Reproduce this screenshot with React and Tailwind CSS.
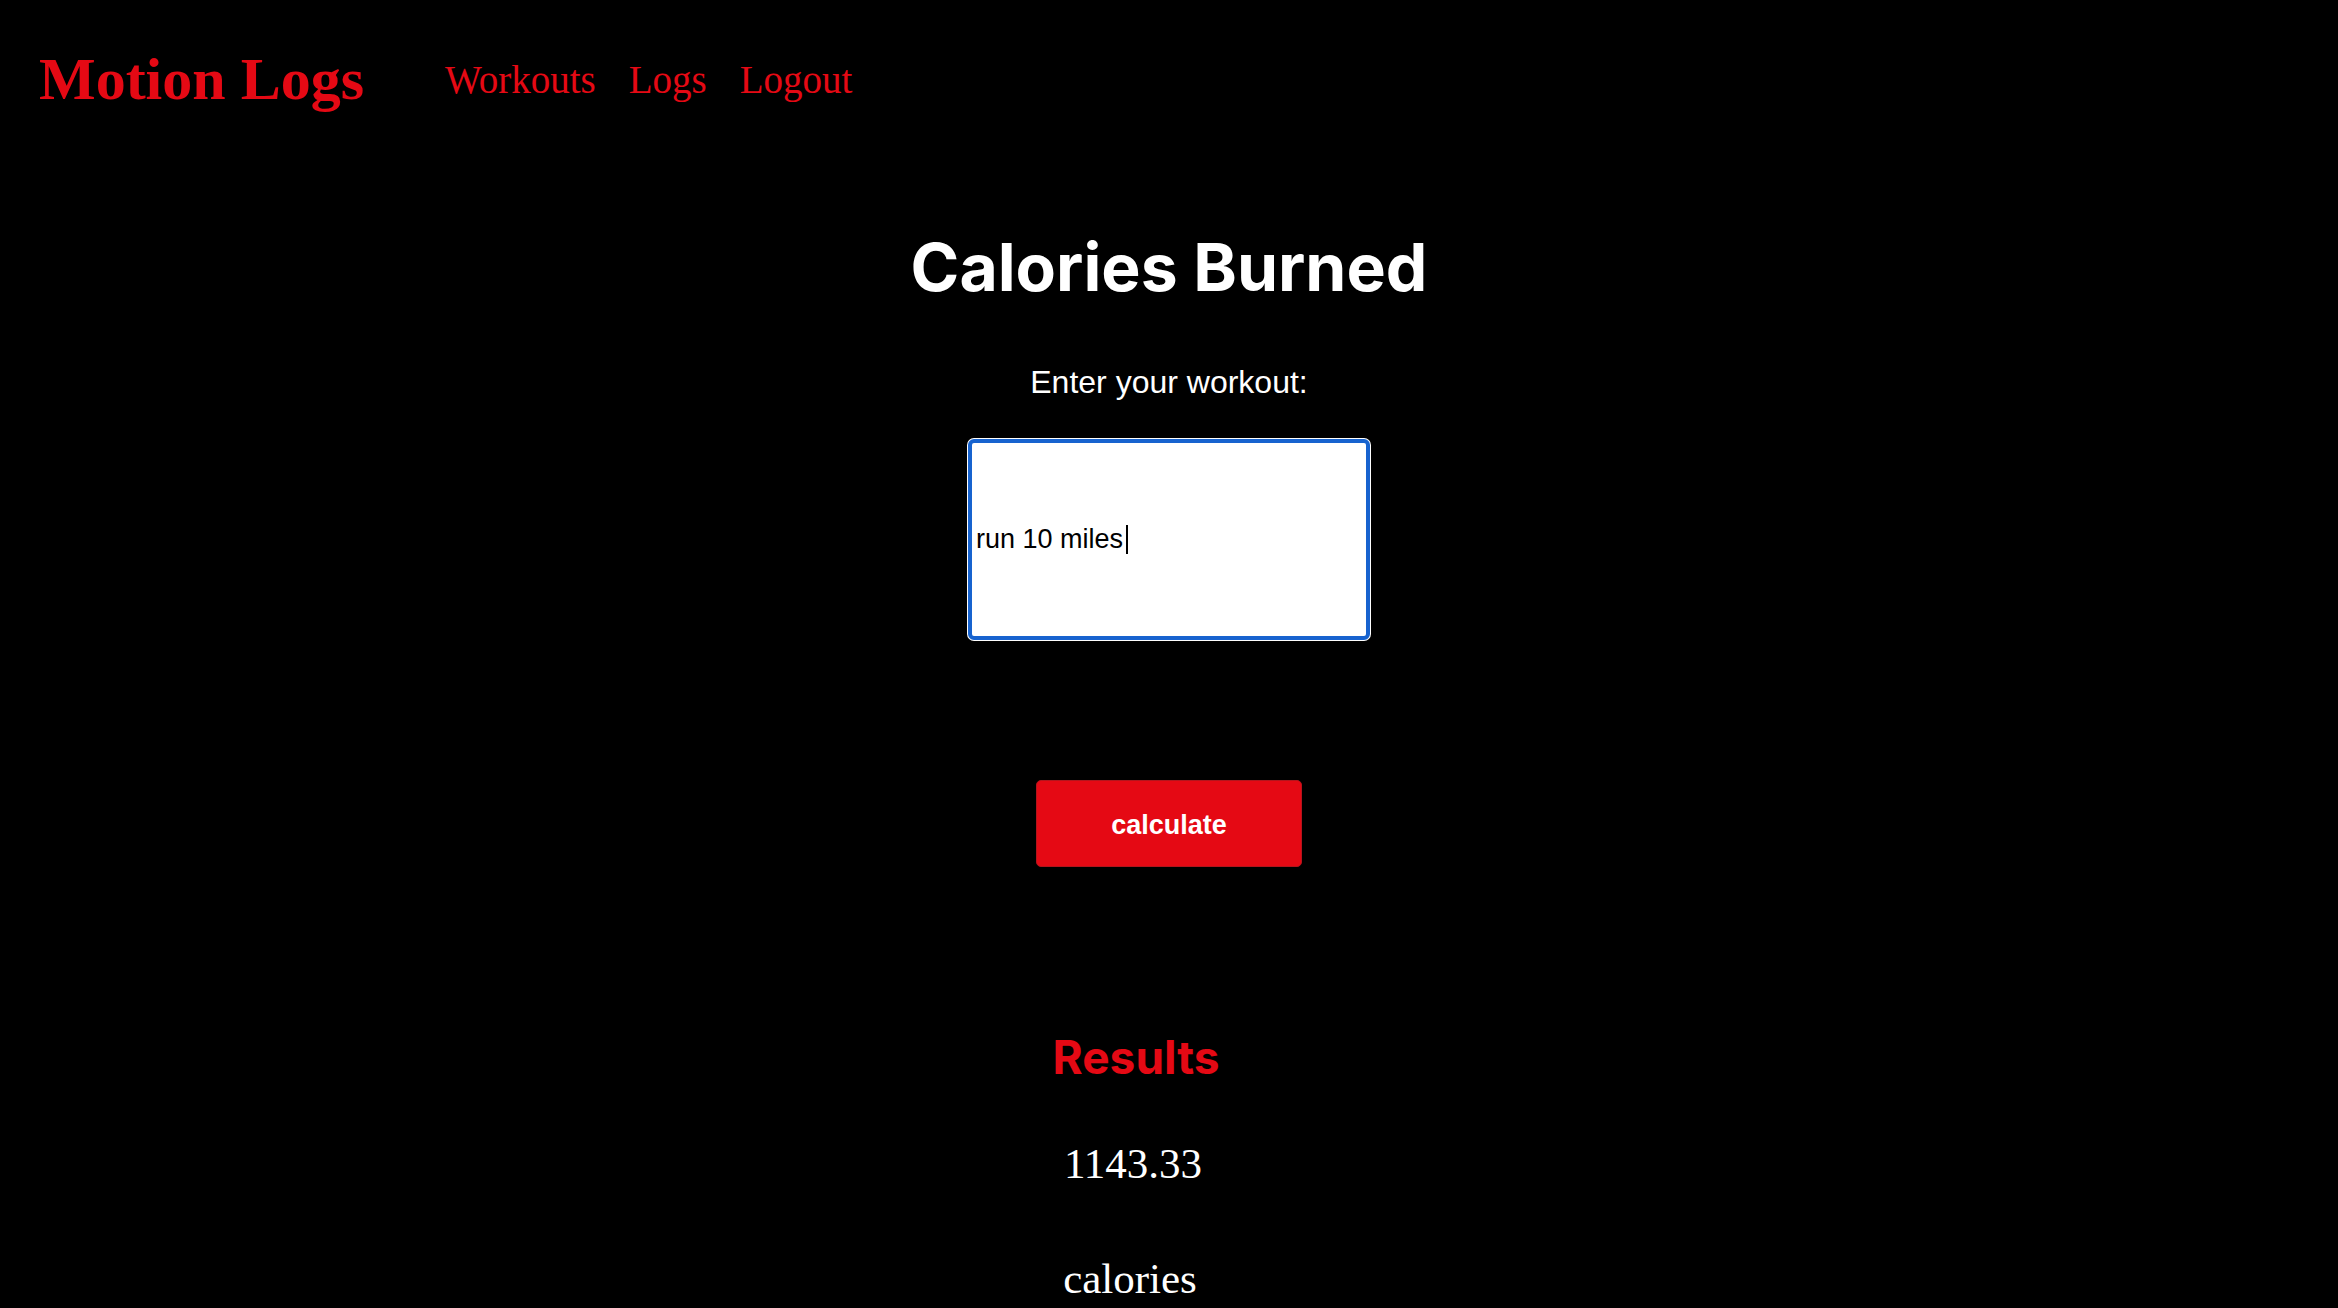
import React from "react";

const serif = "font-['Liberation_Serif','Times_New_Roman',serif]";
const sans = "font-['Liberation_Sans',Arial,sans-serif]";
const inter = "font-['Inter','Liberation_Sans',sans-serif]";

function Header() {
  return (
    <header className="flex items-center pl-[39px] pt-[49px]">
      <h1 className={`${serif} text-[60px] leading-[60px] font-bold text-[#e50914]`}>Motion Logs</h1>
      <nav className={`${serif} ml-[81px] flex items-center gap-[33px] text-[39px] leading-[39px] text-[#e50914]`}>
        <a href="#">Workouts</a>
        <a href="#">Logs</a>
        <a href="#">Logout</a>
      </nav>
    </header>
  );
}

export default function App() {
  return (
    <div className="min-h-[1308px] bg-black overflow-hidden">
      <Header />

      <main className="flex flex-col items-center">
        <h2 className={`${inter} mt-[125px] text-[66px] leading-[66px] font-bold text-white`}>Calories Burned</h2>

        <label className={`${sans} mt-[66px] text-[32px] leading-[32px] text-white`}>Enter your workout:</label>

        {/* focused input */}
        <div className="mt-[41px] flex h-[201px] w-[402px] items-center rounded-[6px] border-[4px] border-[#1763cf] bg-white pl-[4px] shadow-[0_0_0_1px_#ffffff]">
          <span className={`${sans} text-[27px] leading-[27px] text-black`}>run 10 miles</span>
          <span className="ml-[3px] h-[29px] w-[2px] bg-black" />
        </div>

        <button
          type="button"
          className={`${sans} mt-[140px] h-[87px] w-[266px] rounded-[5px] border border-[#b3141c] bg-[#e50914] pt-[3px] text-[27px] font-bold text-white`}
        >
          calculate
        </button>

        <section className="flex flex-col items-center">
          <h3 className={`${inter} mt-[167px] pr-[66px] text-[46px] leading-[46px] font-bold text-[#e50914]`}>Results</h3>
          <p className={`${serif} mt-[62px] pr-[72px] text-[43px] leading-[43px] text-white`}>1143.33</p>
          <p className={`${serif} mt-[72px] pr-[78px] text-[43px] leading-[43px] text-white`}>calories</p>
        </section>
      </main>
    </div>
  );
}
